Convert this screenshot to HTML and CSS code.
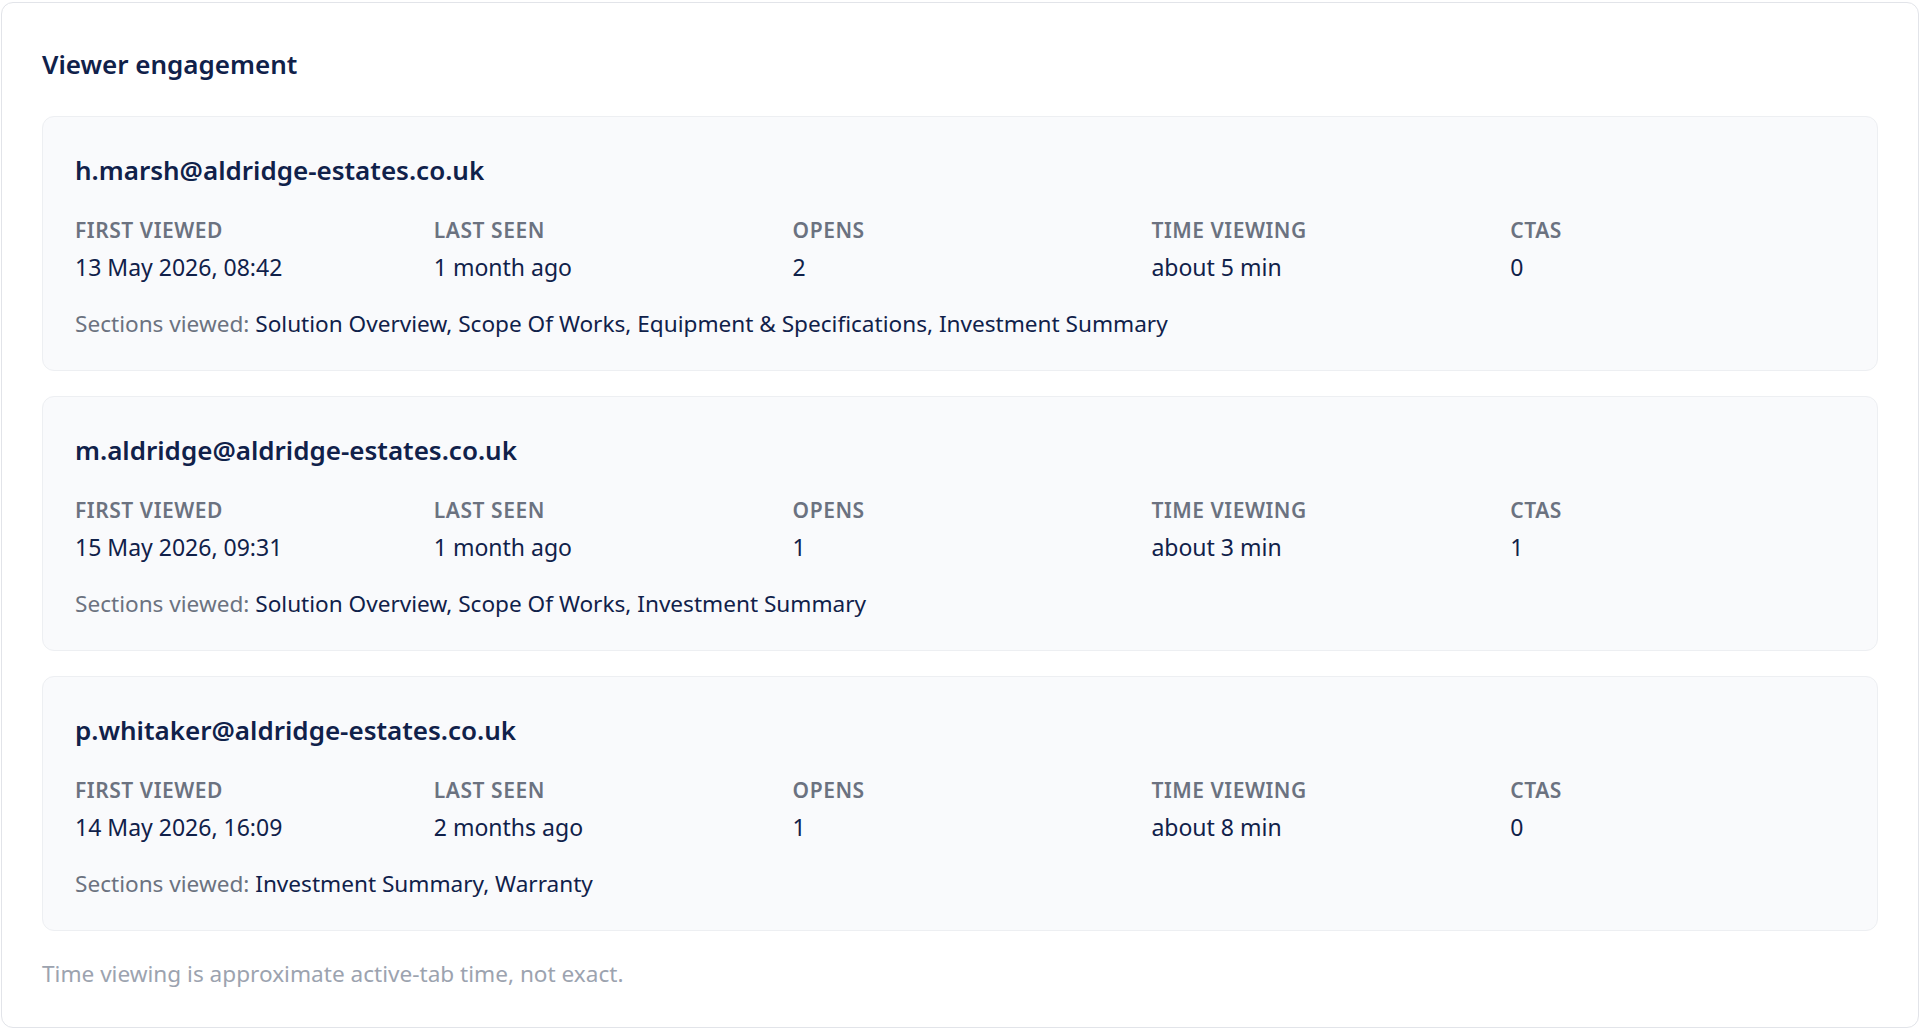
FILE: index.html
```html
<!DOCTYPE html>
<html lang="en">
<head>
<meta charset="utf-8">
<title>Viewer engagement</title>
<link rel="stylesheet" href="styles.css">
</head>
<body>
<section class="panel">
  <h2 class="panel-title">Viewer engagement</h2>
  <div class="viewers">
    <article class="viewer">
      <h3 class="viewer-email">h.marsh@aldridge-estates.co.uk</h3>
      <div class="stats">
        <div class="stat"><div class="stat-label">First viewed</div><div class="stat-value">13 May 2026, 08:42</div></div>
        <div class="stat"><div class="stat-label">Last seen</div><div class="stat-value">1 month ago</div></div>
        <div class="stat"><div class="stat-label">Opens</div><div class="stat-value">2</div></div>
        <div class="stat"><div class="stat-label">Time viewing</div><div class="stat-value">about 5 min</div></div>
        <div class="stat"><div class="stat-label">CTAs</div><div class="stat-value">0</div></div>
      </div>
      <p class="sections"><span class="sections-label">Sections viewed:</span> Solution Overview, Scope Of Works, Equipment &amp; Specifications, Investment Summary</p>
    </article>
    <article class="viewer">
      <h3 class="viewer-email">m.aldridge@aldridge-estates.co.uk</h3>
      <div class="stats">
        <div class="stat"><div class="stat-label">First viewed</div><div class="stat-value">15 May 2026, 09:31</div></div>
        <div class="stat"><div class="stat-label">Last seen</div><div class="stat-value">1 month ago</div></div>
        <div class="stat"><div class="stat-label">Opens</div><div class="stat-value">1</div></div>
        <div class="stat"><div class="stat-label">Time viewing</div><div class="stat-value">about 3 min</div></div>
        <div class="stat"><div class="stat-label">CTAs</div><div class="stat-value">1</div></div>
      </div>
      <p class="sections"><span class="sections-label">Sections viewed:</span> Solution Overview, Scope Of Works, Investment Summary</p>
    </article>
    <article class="viewer">
      <h3 class="viewer-email">p.whitaker@aldridge-estates.co.uk</h3>
      <div class="stats">
        <div class="stat"><div class="stat-label">First viewed</div><div class="stat-value">14 May 2026, 16:09</div></div>
        <div class="stat"><div class="stat-label">Last seen</div><div class="stat-value">2 months ago</div></div>
        <div class="stat"><div class="stat-label">Opens</div><div class="stat-value">1</div></div>
        <div class="stat"><div class="stat-label">Time viewing</div><div class="stat-value">about 8 min</div></div>
        <div class="stat"><div class="stat-label">CTAs</div><div class="stat-value">0</div></div>
      </div>
      <p class="sections"><span class="sections-label">Sections viewed:</span> Investment Summary, Warranty</p>
    </article>
  </div>
  <p class="note">Time viewing is approximate active-tab time, not exact.</p>
</section>
</body>
</html>
```

FILE: styles.css
```css
* { box-sizing: border-box; }

html, body {
  margin: 0;
  padding: 0;
  background: #ffffff;
}

body {
  font-family: "Noto Sans", "Open Sans", sans-serif;
  color: #10214a;
  padding: 2px 1px 1px 1px;
}

.panel {
  border: 1px solid #e2e4e9;
  border-radius: 12px;
  padding: 40px 40px 37px 40px;
  background: #ffffff;
}

.panel-title {
  margin: 0 0 31px 0;
  font-size: 26px;
  line-height: 42px;
  font-weight: 600;
  color: #10214a;
}

.viewers {
  display: flex;
  flex-direction: column;
  gap: 25px;
}

.viewer {
  background: #f9fafc;
  border: 1px solid #edeff2;
  border-radius: 12px;
  padding: 35px 32px 30px 32px;
}

.viewer-email {
  margin: 0 0 27px 0;
  font-size: 26px;
  line-height: 36px;
  font-weight: 600;
  color: #10214a;
}

.stats {
  display: grid;
  grid-template-columns: repeat(5, 1fr);
  gap: 24px;
}

.stat-label {
  font-size: 21px;
  line-height: 30px;
  font-weight: 600;
  text-transform: uppercase;
  letter-spacing: 0.55px;
  color: #6b7280;
  margin-bottom: 6px;
}

.stat-value {
  font-size: 23px;
  line-height: 32px;
  color: #10214a;
}

.sections {
  margin: 25px 0 0 0;
  font-size: 22.6px;
  line-height: 32px;
  color: #10214a;
}

.sections-label {
  color: #6b7280;
}

.note {
  margin: 27px 0 0 0;
  font-size: 22.6px;
  line-height: 32px;
  color: #9ca3af;
}
```
